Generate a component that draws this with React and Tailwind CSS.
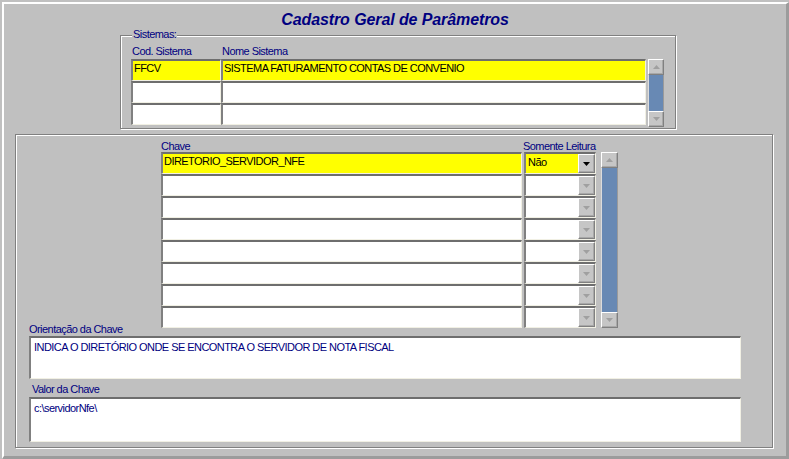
import React from 'react';

const sunken =
  'border-t-2 border-l-2 border-r border-b border-t-[#6e6e6e] border-l-[#808080] border-r-[#f1f0e4] border-b-[#f1f0e4]';
const raised =
  'border-t border-l border-r border-b border-t-white border-l-white border-r-[#808080] border-b-[#808080] shadow-[inset_-1px_-1px_0_#a8a8a8]';

function Arrow({ up, dark }) {
  return (
    <svg width="7" height="4" viewBox="0 0 7 4">
      {up ? (
        <polygon points="3.5,0 7,4 0,4" fill={dark ? '#000' : '#a0a0a0'} />
      ) : (
        <polygon points="0,0 7,0 3.5,4" fill={dark ? '#000' : '#a0a0a0'} />
      )}
    </svg>
  );
}

function ScrollBtn({ up }) {
  return (
    <div className={`h-[16px] shrink-0 bg-[#c6c6c6] flex items-center justify-center ${raised}`}>
      <Arrow up={up} />
    </div>
  );
}

function ScrollBar({ className }) {
  return (
    <div className={`flex flex-col ${className}`}>
      <ScrollBtn up />
      <div className="flex-1 bg-[#6889b4] border-l border-r border-l-[#dcdcdc] border-r-[#9a9a9a]" />
      <ScrollBtn />
    </div>
  );
}

function Field({ className, yellow, children }) {
  return (
    <div
      className={`h-[22px] ${sunken} ${yellow ? 'bg-[#ffff00]' : 'bg-white'} pl-[1px] pt-[1px] leading-[12px] text-black whitespace-nowrap overflow-hidden ${className}`}
    >
      {children}
    </div>
  );
}

function Combo({ value, active }) {
  return (
    <div className={`w-[72px] h-[22px] flex ${sunken} ${active ? 'bg-[#ffff00]' : 'bg-white'}`}>
      <div className="flex-1 pl-[2px] pt-[2px] leading-[12px] text-black">{value}</div>
      <div className={`w-[17px] bg-[#c6c6c6] flex items-center justify-center ${raised}`}>
        <Arrow dark={active} />
      </div>
    </div>
  );
}

const sistemas = [
  { cod: 'FFCV', nome: 'SISTEMA FATURAMENTO CONTAS DE CONVENIO' },
  { cod: '', nome: '' },
  { cod: '', nome: '' },
];

const chaves = [
  { chave: 'DIRETORIO_SERVIDOR_NFE', leitura: 'Não' },
  ...Array.from({ length: 7 }, () => ({ chave: '', leitura: '' })),
];

const etched = 'border border-[#808080] shadow-[inset_1px_1px_0_#fff,1px_1px_0_#fff]';

export default function App() {
  return (
    <div className="w-[789px] h-[459px] bg-[#c0c0c0] pl-[2px] pt-[2px] font-['Liberation_Sans',Arial,sans-serif] text-[11px] tracking-[-0.55px] text-[#000080]">
      <div className="w-full h-full flex flex-col border-l-2 border-t-2 border-r-[3px] border-b-[3px] border-l-white border-t-white border-r-[#9c9c9c] border-b-[#9c9c9c]">
        <h1 className="pt-[7px] text-center text-[16px] leading-[18px] font-bold italic tracking-[-0.1px]">
          Cadastro Geral de Parâmetros
        </h1>

        {/* Sistemas */}
        <div className={`relative ml-[116px] mt-[6px] w-[556px] h-[94px] pl-[10px] pt-[9px] ${etched}`}>
          <span className="absolute left-[11px] top-[-8px] px-[1px] bg-[#c0c0c0] leading-[12px]">Sistemas:</span>
          <div className="flex h-[14px] leading-[12px]">
            <span className="w-[90px] pl-[1px]">Cod. Sistema</span>
            <span className="pl-[1px]">Nome Sistema</span>
          </div>
          <div className="flex items-start">
            <div className="flex flex-col">
              {sistemas.map((s, i) => (
                <div key={i} className="flex">
                  <Field className="w-[90px]" yellow={i === 0}>{s.cod}</Field>
                  <Field className="w-[425px]" yellow={i === 0}>{s.nome}</Field>
                </div>
              ))}
            </div>
            <ScrollBar className="ml-[2px] w-[16px] h-[68px]" />
          </div>
        </div>

        {/* Chaves */}
        <div className={`ml-[11px] mt-[5px] w-[758px] h-[314px] pt-[5px] ${etched}`}>
          <div className="flex ml-[145px] h-[12px] leading-[12px]">
            <span className="w-[361px]">Chave</span>
            <span className="ml-[1px]">Somente Leitura</span>
          </div>
          <div className="flex items-start ml-[145px]">
            <div className="flex flex-col">
              {chaves.map((c, i) => (
                <div key={i} className="flex">
                  <Field className="w-[361px]" yellow={i === 0}>{c.chave}</Field>
                  <div className="ml-[2px]">
                    <Combo value={c.leitura} active={i === 0} />
                  </div>
                </div>
              ))}
            </div>
            <ScrollBar className="ml-[5px] w-[17px] h-[176px]" />
          </div>

          <div className="ml-[13px] mt-[-5px] h-[13px] leading-[12px]">Orientação da Chave</div>
          <div className={`ml-[13px] w-[712px] h-[43px] ${sunken} bg-white pl-[3px] pt-[3px] leading-[12px]`}>
            INDICA O DIRETÓRIO ONDE SE ENCONTRA O SERVIDOR DE NOTA FISCAL
          </div>

          <div className="ml-[16px] mt-[4px] h-[14px] leading-[12px]">Valor da Chave</div>
          <div className={`ml-[13px] w-[712px] h-[45px] ${sunken} bg-white pl-[3px] pt-[3px] leading-[12px]`}>
            c:\servidorNfe\
          </div>
        </div>
      </div>
    </div>
  );
}
